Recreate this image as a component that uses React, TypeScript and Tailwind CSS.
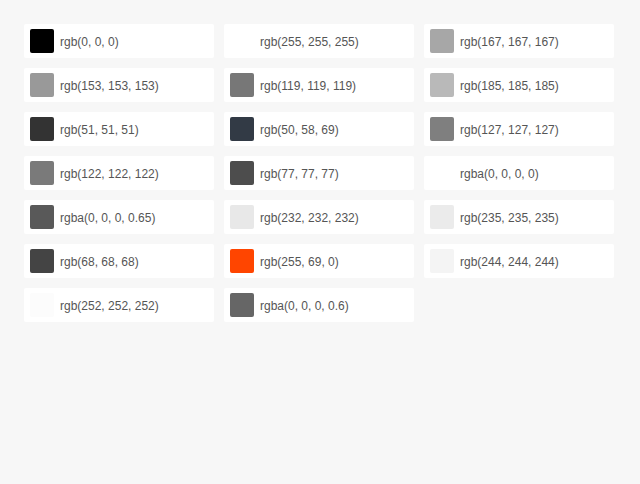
const colors = [
  "rgb(0, 0, 0)",
  "rgb(255, 255, 255)",
  "rgb(167, 167, 167)",
  "rgb(153, 153, 153)",
  "rgb(119, 119, 119)",
  "rgb(185, 185, 185)",
  "rgb(51, 51, 51)",
  "rgb(50, 58, 69)",
  "rgb(127, 127, 127)",
  "rgb(122, 122, 122)",
  "rgb(77, 77, 77)",
  "rgba(0, 0, 0, 0)",
  "rgba(0, 0, 0, 0.65)",
  "rgb(232, 232, 232)",
  "rgb(235, 235, 235)",
  "rgb(68, 68, 68)",
  "rgb(255, 69, 0)",
  "rgb(244, 244, 244)",
  "rgb(252, 252, 252)",
  "rgba(0, 0, 0, 0.6)",
];

export default function App() {
  return (
    <div
      className="min-h-[484px] bg-[#f7f7f7] p-[24px]"
      style={{ fontFamily: '"Liberation Sans", Arial, sans-serif' }}
    >
      <div className="grid grid-cols-[190px_190px_190px] gap-[10px]">
        {colors.map((c) => (
          <div
            key={c}
            className="flex h-[34px] items-center gap-[6px] rounded-[2px] bg-white px-[6px]"
          >
            {/* swatch colour comes from data */}
            <div className="h-[24px] w-[24px] shrink-0 rounded-[2px]" style={{ backgroundColor: c }} />
            <span className="pt-[2px] text-[12px] text-[#555555]">{c}</span>
          </div>
        ))}
      </div>
    </div>
  );
}
